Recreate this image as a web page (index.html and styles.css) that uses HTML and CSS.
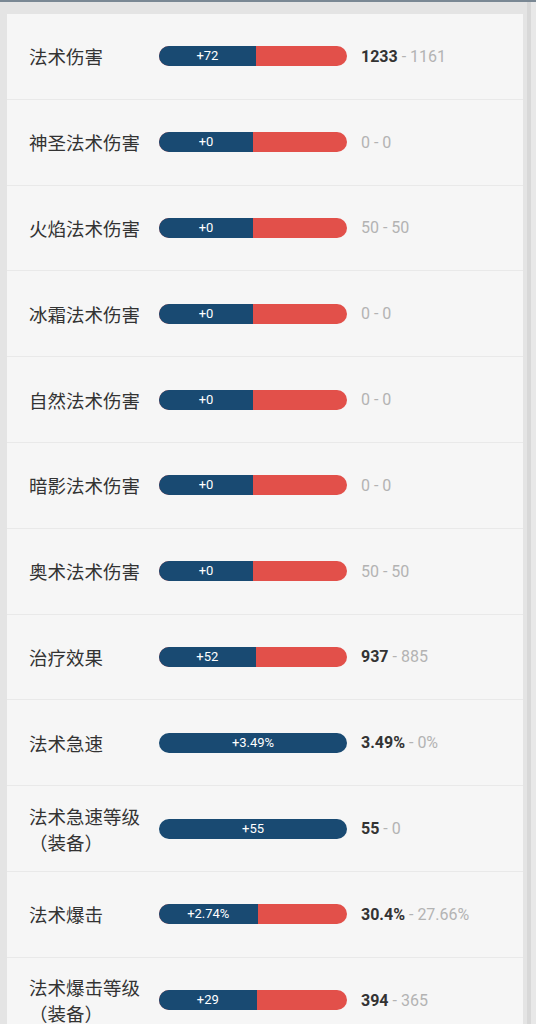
FILE: index.html
```html
<!DOCTYPE html>
<html lang="zh">
<head>
<meta charset="utf-8">
<link rel="stylesheet" href="styles.css">
</head>
<body>
<div class="page">
  <div class="card">
    <div class="row">
      <div class="label">法术伤害</div>
      <div class="bar"><div class="pos" style="width:51.5%">+72</div></div>
      <div class="vals"><b>1233</b> - 1161</div>
    </div>
    <div class="row">
      <div class="label">神圣法术伤害</div>
      <div class="bar"><div class="pos" style="width:50%">+0</div></div>
      <div class="vals">0 - 0</div>
    </div>
    <div class="row">
      <div class="label">火焰法术伤害</div>
      <div class="bar"><div class="pos" style="width:50%">+0</div></div>
      <div class="vals">50 - 50</div>
    </div>
    <div class="row">
      <div class="label">冰霜法术伤害</div>
      <div class="bar"><div class="pos" style="width:50%">+0</div></div>
      <div class="vals">0 - 0</div>
    </div>
    <div class="row">
      <div class="label">自然法术伤害</div>
      <div class="bar"><div class="pos" style="width:50%">+0</div></div>
      <div class="vals">0 - 0</div>
    </div>
    <div class="row">
      <div class="label">暗影法术伤害</div>
      <div class="bar"><div class="pos" style="width:50%">+0</div></div>
      <div class="vals">0 - 0</div>
    </div>
    <div class="row">
      <div class="label">奥术法术伤害</div>
      <div class="bar"><div class="pos" style="width:50%">+0</div></div>
      <div class="vals">50 - 50</div>
    </div>
    <div class="row">
      <div class="label">治疗效果</div>
      <div class="bar"><div class="pos" style="width:51.4%">+52</div></div>
      <div class="vals"><b>937</b> - 885</div>
    </div>
    <div class="row">
      <div class="label">法术急速</div>
      <div class="bar"><div class="pos" style="width:100%">+3.49%</div></div>
      <div class="vals"><b>3.49%</b> - 0%</div>
    </div>
    <div class="row">
      <div class="label">法术急速等级<br>（装备）</div>
      <div class="bar"><div class="pos" style="width:100%">+55</div></div>
      <div class="vals"><b>55</b> - 0</div>
    </div>
    <div class="row">
      <div class="label">法术爆击</div>
      <div class="bar"><div class="pos" style="width:52.4%">+2.74%</div></div>
      <div class="vals"><b>30.4%</b> - 27.66%</div>
    </div>
    <div class="row">
      <div class="label">法术爆击等级<br>（装备）</div>
      <div class="bar"><div class="pos" style="width:51.9%">+29</div></div>
      <div class="vals"><b>394</b> - 365</div>
    </div>
  </div>
</div>
</body>
</html>
```

FILE: styles.css
```css
html, body {
  margin: 0;
  padding: 0;
}
body {
  background: #e4e4e4;
  font-family: Roboto, "Noto Sans CJK SC", sans-serif;
  height: 1024px;
  overflow: hidden;
}
.page {
  border-top: 2px solid #7a8894;
  padding: 12px 13px 0 7px;
  background: linear-gradient(to right, #e4e4e4 0, #e4e4e4 527px, #d8d8d8 527px, #d8d8d8 531px, #e8e8e8 531px);
  min-height: 1010px;
}
.card {
  background: #f6f6f6;
}
.row {
  display: flex;
  align-items: center;
  height: 84.8px;
  border-bottom: 1px solid #e9e9e9;
  padding-left: 22px;
}
.label {
  width: 130px;
  flex: none;
  font-family: "Noto Sans CJK SC", sans-serif;
  font-size: 18.5px;
  line-height: 26px;
  color: #333333;
}
.bar {
  width: 188px;
  height: 20px;
  flex: none;
  border-radius: 10px;
  background: #e2504a;
  overflow: hidden;
  display: flex;
}
.pos {
  background: #194a72;
  color: #ffffff;
  font-size: 13px;
  line-height: 20px;
  text-align: center;
  height: 20px;
}
.vals {
  margin-left: 14px;
  font-size: 16px;
  color: #b3b3b3;
}
.vals b {
  color: #333333;
  font-weight: 700;
}
```
